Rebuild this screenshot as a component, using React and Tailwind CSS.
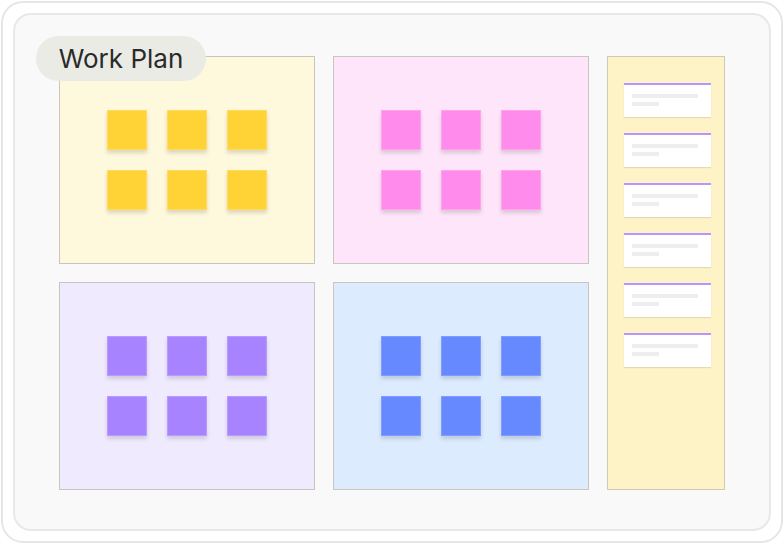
import React from 'react';

const boards = [
  { bg: 'bg-[#fef8dc]', sticky: 'bg-[#ffd336] border-[#ffdc5e]' },
  { bg: 'bg-[#fee5f9]', sticky: 'bg-[#ff8bec] border-[#ffa3f0]' },
  { bg: 'bg-[#f0eafe]', sticky: 'bg-[#a783ff] border-[#b89bff]' },
  { bg: 'bg-[#dcebfe]', sticky: 'bg-[#6689ff] border-[#7f9cff]' },
];

function Board({ board }) {
  return (
    <div
      className={`w-[256px] h-[208px] border border-[#c9c6bf] ${board.bg} flex items-center justify-center`}
    >
      <div className="grid grid-cols-3 gap-5">
        {[0, 1, 2, 3, 4, 5].map((i) => (
          <div
            key={i}
            className={`w-10 h-10 border ${board.sticky} shadow-[0_3px_4px_rgba(0,0,0,0.14)]`}
          />
        ))}
      </div>
    </div>
  );
}

function TaskCard() {
  return (
    <div className="w-[87px] h-[34px] bg-white border-t-2 border-[#b996ff] shadow-[0_1px_1px_rgba(0,0,0,0.1)] pl-[8px] pt-[9px] flex flex-col gap-[4px]">
      <div className="w-[66px] h-[4px] bg-[#eeeeee]" />
      <div className="w-[27px] h-[4px] bg-[#eeeeee]" />
    </div>
  );
}

export default function App() {
  return (
    <div className="w-[784px] h-[544px] bg-white p-[1px]" style={{ fontFamily: 'Inter, "Open Sans", sans-serif' }}>
      <div className="w-full h-full rounded-[22px] border-2 border-[#e6e6e6] p-[10px]">
        <div className="relative w-full h-full rounded-[18px] border-2 border-[#e8e8e8] bg-[#f9f9f9] pl-[44px] pt-[41px]">
          <div className="flex gap-[18px]">
            <div className="flex flex-col gap-[18px]">
              <div className="flex gap-[18px]">
                <Board board={boards[0]} />
                <Board board={boards[1]} />
              </div>
              <div className="flex gap-[18px]">
                <Board board={boards[2]} />
                <Board board={boards[3]} />
              </div>
            </div>
            <div className="w-[118px] h-[434px] bg-[#fef2c7] border border-[#cfcab5] pl-[16px] pt-[26px] flex flex-col gap-[16px]">
              {[0, 1, 2, 3, 4, 5].map((i) => (
                <TaskCard key={i} />
              ))}
            </div>
          </div>
          <div className="absolute left-[21px] top-[21px] w-[170px] h-[45px] rounded-full bg-[#ebebe6] flex items-center justify-center">
            <span className="text-[26px] text-[#2a2a2a]">Work Plan</span>
          </div>
        </div>
      </div>
    </div>
  );
}
